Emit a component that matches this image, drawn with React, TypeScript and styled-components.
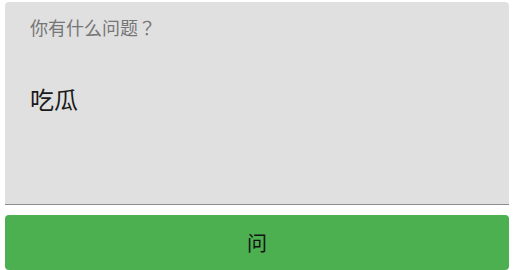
import React, { useState } from "react";
import styled, { createGlobalStyle } from "styled-components";

const GlobalStyle = createGlobalStyle`
  html, body {
    margin: 0;
    padding: 0;
    background: #ffffff;
    font-family: "Noto Sans CJK SC", "Noto Sans", sans-serif;
  }
`;

const Page = styled.div`
  width: 504px;
  padding: 2px 0 0 5px;
  display: flex;
  flex-direction: column;
  gap: 10px;
`;

const Field = styled.div`
  height: 202px;
  background: #e0e0e0;
  border-radius: 4px 4px 0 0;
  border-bottom: 1px solid #8c8c8c;
  display: flex;
  flex-direction: column;
  padding: 0 25px;
`;

const Label = styled.label`
  font-family: "Noto Sans CJK JP", "Noto Sans CJK SC", sans-serif;
  font-size: 18px;
  line-height: 24px;
  color: #767676;
  margin-top: 13px;
`;

const Input = styled.textarea`
  flex: 1;
  border: none;
  outline: none;
  resize: none;
  background: transparent;
  font-family: inherit;
  font-size: 24px;
  line-height: 32px;
  color: #1a1a1a;
  padding: 0;
  margin-top: 44px;
`;

const AskButton = styled.button`
  height: 55px;
  border: none;
  border-radius: 4px;
  background: #4caf50;
  color: #111;
  font-family: inherit;
  font-size: 20px;
  cursor: pointer;
  padding: 0;
`;

export default function App() {
  const [question, setQuestion] = useState("吃瓜");

  return (
    <>
      <GlobalStyle />
      <Page>
        <Field>
          <Label>你有什么问题？</Label>
          <Input value={question} onChange={(e) => setQuestion(e.target.value)} />
        </Field>
        <AskButton>问</AskButton>
      </Page>
    </>
  );
}
